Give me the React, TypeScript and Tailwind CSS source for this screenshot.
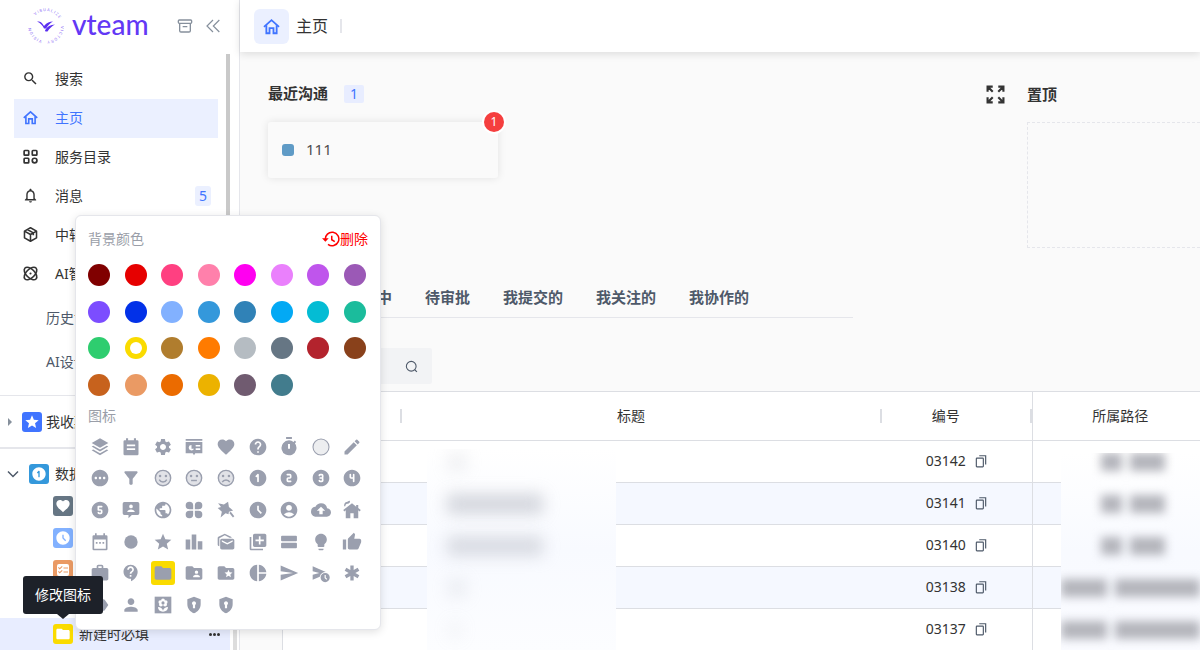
import type { ComponentType, ReactNode } from "react";
import clsx from "clsx";
import {
  MdAccessTimeFilled,
  MdAccountCircle,
  MdBackup,
  MdChecklist,
  MdCircle,
  MdContactSupport,
  MdEdit,
  MdEmergency,
  MdFavorite,
  MdFilterAlt,
  MdFolder,
  MdFolderShared,
  MdFolderSpecial,
  MdHelp,
  MdLabel,
  MdLeaderboard,
  MdLibraryAdd,
  MdLightbulb,
  MdMarkAsUnread,
  MdNotificationsNone,
  MdPending,
  MdPerson,
  MdPieChart,
  MdPublic,
  MdSearch,
  MdSend,
  MdSettings,
  MdStar,
  MdThumbUp,
  MdWork,
} from "react-icons/md";
import {
  TbCircleNumber1Filled,
  TbCircleNumber2Filled,
  TbCircleNumber3Filled,
  TbCircleNumber4Filled,
  TbCircleNumber5Filled,
} from "react-icons/tb";

type IconType = ComponentType<{ className?: string }>;

interface SvgProps {
  className?: string;
  stroke?: number;
  children: ReactNode;
}

function Line({ className, stroke = 2, children }: SvgProps) {
  return (
    <svg viewBox="0 0 24 24" fill="none" stroke="currentColor" strokeWidth={stroke} className={className} aria-hidden>
      {children}
    </svg>
  );
}

function Solid({ className, children }: SvgProps) {
  return (
    <svg viewBox="0 0 24 24" fill="currentColor" className={className} aria-hidden>
      {children}
    </svg>
  );
}

const HomeIcon: IconType = ({ className }) => (
  <Line className={className} stroke={2.3}>
    <path d="M2.500 12.500 12 4l9.500 8.500" />
    <path d="M5.500 10.500V20.500H9.500v-6.500h5v6.500h4V10.500" />
  </Line>
);

const AppsIcon: IconType = ({ className }) => (
  <Line className={className} stroke={2.4}>
    <rect x="3" y="3.500" width="6.500" height="6.500" rx="1" />
    <rect x="14.500" y="3.500" width="6.500" height="6.500" rx="1" />
    <rect x="3" y="14.500" width="6.500" height="6.500" rx="1" />
    <circle cx="17.800" cy="17.800" r="3.300" />
  </Line>
);

const BoxIcon: IconType = ({ className }) => (
  <Line className={className} stroke={2.2}>
    <path d="m12 2.500 8.500 4.800v9.400L12 21.500l-8.500-4.800V7.300zM3.500 7.300 12 12l8.500-4.700M12 12v9.500M7.500 5l8.500 4.700V13" strokeLinejoin="round" />
  </Line>
);

const AtomIcon: IconType = ({ className }) => (
  <Line className={className} stroke={2.3}>
    <ellipse cx="12" cy="12" rx="11" ry="6" transform="rotate(45 12 12)" />
    <ellipse cx="12" cy="12" rx="11" ry="6" transform="rotate(-45 12 12)" />
    <circle cx="12" cy="12" r="1.500" fill="currentColor" stroke="none" />
  </Line>
);

const ArchiveIcon: IconType = ({ className }) => (
  <Line className={className} stroke={2}>
    <rect x="2" y="3" width="20" height="5" rx="1.500" />
    <path d="M4 8v11a2 2 0 0 0 2 2h12a2 2 0 0 0 2-2V8M8.500 13h7" />
  </Line>
);

const CollapseIcon: IconType = ({ className }) => (
  <Line className={className} stroke={1.8}>
    <path d="m12 3-9 9 9 9M21.500 3l-9 9 9 9" />
  </Line>
);

const LayersIcon: IconType = ({ className }) => (
  <Solid className={className}>
    <path d="m12 1.500 10 5.700-10 5.700L2 7.200z" />
    <path d="m2 11.500 1.900-1.100L12 15l8.100-4.600L22 11.500l-10 5.800zM2 16l1.900-1.100L12 19.500l8.100-4.600L22 16l-10 5.800z" />
  </Solid>
);

const NoteIcon: IconType = ({ className }) => (
  <Solid className={className}>
    <path
      fillRule="evenodd"
      d="M6 1.500h2.500V4h7V1.500H18V4h1.500A1.500 1.500 0 0 1 21 5.500v15a1.500 1.500 0 0 1-1.500 1.500h-15A1.500 1.500 0 0 1 3 20.500v-15A1.500 1.500 0 0 1 4.500 4H6zM7 9v2h10V9zm0 4.500v2h10v-2z"
    />
  </Solid>
);

const BoardIcon: IconType = ({ className }) => (
  <Solid className={className}>
    <path
      fillRule="evenodd"
      d="M2 2.500h20v2H2zM2 6h20v13.500h-8.500L12 22l-1.500-2.500H2zm7 3.500a3.300 3.300 0 1 0 3 4.500H9zm5 0v2h5.500v-2zm0 4v2h5.500v-2z"
    />
  </Solid>
);

const TimerIcon: IconType = ({ className }) => (
  <Solid className={className}>
    <path
      fillRule="evenodd"
      d="M8.500 0h7v2.500h-7zM12 4a9 9 0 0 1 5.500 1.900L19 4.300l1.600 1.600-1.500 1.600A9 9 0 1 1 12 4m-1.200 4.500V14h2.400V8.500z"
    />
  </Solid>
);

const RingIcon: IconType = ({ className }) => (
  <Line className={className} stroke={1.3}>
    <circle cx="12" cy="12" r="9.600" fill="currentColor" fillOpacity="0.18" />
  </Line>
);

function Face({ className, mouth }: { className?: string; mouth: string }) {
  return (
    <Line className={className} stroke={1.700}>
      <circle cx="12" cy="12" r="9.200" fill="currentColor" fillOpacity="0.3" />
      <circle cx="8.500" cy="9.500" r="1.500" fill="currentColor" stroke="none" />
      <circle cx="15.500" cy="9.500" r="1.500" fill="currentColor" stroke="none" />
      <path d={mouth} />
    </Line>
  );
}

const SmileIcon: IconType = ({ className }) => <Face className={className} mouth="M7.500 14c1.700 3.600 7.300 3.600 9 0" />;
const NeutralIcon: IconType = ({ className }) => <Face className={className} mouth="M8.500 15h7" />;
const SadIcon: IconType = ({ className }) => <Face className={className} mouth="M7.500 17c1.700-3.600 7.300-3.600 9 0" />;

const ChatPersonIcon: IconType = ({ className }) => (
  <Solid className={className}>
    <path
      fillRule="evenodd"
      d="M4 2.500h16a2 2 0 0 1 2 2V16a2 2 0 0 1-2 2h-7l-4 4v-4H4a2 2 0 0 1-2-2V4.500a2 2 0 0 1 2-2m8 3a2.200 2.200 0 1 0 0 4.400 2.200 2.200 0 0 0 0-4.400M7.500 14.500h9c0-2-2.300-3.200-4.500-3.200s-4.500 1.200-4.500 3.200"
    />
  </Solid>
);

const CloverIcon: IconType = ({ className }) => (
  <Solid className={className}>
    <path d="M11 11H6.500A4.500 4.500 0 1 1 11 6.500zM13 11V6.500a4.500 4.500 0 1 1 4.500 4.500zM11 13v4.500A4.500 4.500 0 1 1 6.500 13zM13 13h4.500a4.500 4.500 0 1 1-4.500 4.500z" />
  </Solid>
);

const WandIcon: IconType = ({ className }) => (
  <Solid className={className}>
    <path d="m2.500 4 7 1.500L14.500 2l1 6.500 5 4-5 1.500-.500 3-3.500-1-6 5 1.500-7-5-4.500 4-1z" />
    <path d="m16 15.500 1.700-1.500 4.300 5.500-1.700 1.500z" />
  </Solid>
);

const CottageIcon: IconType = ({ className }) => (
  <Solid className={className}>
    <path d="M12 4 1.500 12l1.300 1.700L4.500 12.400V22H10v-6h4v6h5.500v-9.600l1.700 1.300 1.300-1.700-3-2.300V6H17v2z" />
    <path d="M4 7.500C4 5 5.500 4.500 7 4.500S8.500 3 9.500 3V1c-2.500 0-2.500 1.500-4 1.500S2.500 4 2.500 7.500z" />
  </Solid>
);

const CalendarIcon: IconType = ({ className }) => (
  <Solid className={className}>
    <path
      fillRule="evenodd"
      d="M6 1.500h2V4h8V1.500h2V4h1.500A1.500 1.500 0 0 1 21 5.500v15a1.500 1.500 0 0 1-1.500 1.500h-15A1.500 1.500 0 0 1 3 20.500v-15A1.500 1.500 0 0 1 4.500 4H6zM5 9v11h14V9zm2 3h2v2H7zm4 0h2v2h-2zm4 0h2v2h-2z"
    />
  </Solid>
);

const DotIcon: IconType = ({ className }) => (
  <Solid className={className}>
    <circle cx="12" cy="12" r="8" />
  </Solid>
);

const RowsIcon: IconType = ({ className }) => (
  <Solid className={className}>
    <rect x="2.500" y="4.500" width="19" height="6.500" rx="1.200" />
    <rect x="2.500" y="13" width="19" height="6.500" rx="1.200" />
  </Solid>
);

const SendLaterIcon: IconType = ({ className }) => (
  <Solid className={className}>
    <path d="M2 4v6l8 2-8 2v6l8.500-3.600A7 7 0 0 1 18.500 11z" />
    <path
      fillRule="evenodd"
      d="M17 12a5.500 5.500 0 1 1 0 11 5.500 5.500 0 0 1 0-11m-.700 2.500v3.400l2.200 2.200 1-1-1.800-1.800v-2.800z"
    />
  </Solid>
);

const FlowerIcon: IconType = ({ className }) => (
  <Solid className={className}>
    <rect x="2" y="2" width="20" height="20" />
    <g fill="#fff">
      <circle cx="12" cy="6.500" r="2.300" />
      <circle cx="8.800" cy="8.500" r="2.300" />
      <circle cx="15.200" cy="8.500" r="2.300" />
      <circle cx="9.500" cy="11.500" r="2.300" />
      <circle cx="14.500" cy="11.500" r="2.300" />
      <path d="M6 14.500c3 0 5.200 1.500 6 4.500.8-3 3-4.500 6-4.500 0 3.500-2.500 5.500-6 5.500s-6-2-6-5.500" />
    </g>
    <circle cx="12" cy="9.500" r="1.900" />
  </Solid>
);

const ShieldIcon: IconType = ({ className }) => (
  <Solid className={className}>
    <path
      fillRule="evenodd"
      d="M12 2 4 5v6.200c0 5 3.300 9.200 8 10.800 4.700-1.600 8-5.800 8-10.800V5zm0 5.500a2.500 2.500 0 0 1 1.300 4.600V16h-2.600v-3.900A2.500 2.500 0 0 1 12 7.500"
    />
  </Solid>
);

const RestoreIcon: IconType = ({ className }) => (
  <Line className={className}>
    <path d="M4.500 13A9 9 0 1 1 8 19.200" />
    <path d="M13 7.500V13l4 2.500" />
    <path d="M0 11h9l-4.500 4.500z" fill="currentColor" stroke="none" />
  </Line>
);

const ExpandIcon: IconType = ({ className }) => (
  <Line className={className} stroke={2.700}>
    <path d="M2 8.500V2h6.500M2 2l6.500 6.500M15.500 2H22v6.500M22 2l-6.500 6.500M2 15.500V22h6.500M2 22l6.500-6.500M22 15.500V22h-6.500M22 22l-6.500-6.500" />
  </Line>
);

const CopyIcon: IconType = ({ className }) => (
  <Line className={className}>
    <rect x="4" y="7" width="12" height="15" rx="1" />
    <path d="M9 3h11v15" />
  </Line>
);

const MENU: { icon: IconType; label: string; count?: number }[] = [
  { icon: MdSearch, label: "搜索" },
  { icon: HomeIcon, label: "主页" },
  { icon: AppsIcon, label: "服务目录" },
  { icon: MdNotificationsNone, label: "消息", count: 5 },
  { icon: BoxIcon, label: "中转" },
  { icon: AtomIcon, label: "AI智" },
];

const COLORS = [
  "#800000", "#e60000", "#ff4081", "#ff80ab", "#ff00f0", "#ea80fc", "#bf55ec", "#9b59b6",
  "#7c4dff", "#0231e8", "#82b1ff", "#3498db", "#3082b7", "#03a9f4", "#04bcd4", "#1bbc9c",
  "#2ecd6f", "#fadb00", "#b07d2e", "#ff7b00", "#b5bcc2", "#667684", "#b3232d", "#89411b",
  "#c7621d", "#ea9a64", "#eb6b00", "#ecb200", "#705b70", "#427c8d",
];
const ACTIVE_COLOR = "#fadb00";

const ICONS: IconType[] = [
  LayersIcon, NoteIcon, MdSettings, BoardIcon, MdFavorite, MdHelp, TimerIcon, RingIcon, MdEdit,
  MdPending, MdFilterAlt, SmileIcon, NeutralIcon, SadIcon, TbCircleNumber1Filled, TbCircleNumber2Filled, TbCircleNumber3Filled, TbCircleNumber4Filled,
  TbCircleNumber5Filled, ChatPersonIcon, MdPublic, CloverIcon, WandIcon, MdAccessTimeFilled, MdAccountCircle, MdBackup, CottageIcon,
  CalendarIcon, DotIcon, MdStar, MdLeaderboard, MdMarkAsUnread, MdLibraryAdd, RowsIcon, MdLightbulb, MdThumbUp,
  MdWork, MdContactSupport, MdFolder, MdFolderShared, MdFolderSpecial, MdPieChart, MdSend, SendLaterIcon, MdEmergency,
  MdLabel, MdPerson, FlowerIcon, ShieldIcon, ShieldIcon,
];

const TABS = ["进行中", "待审批", "我提交的", "我关注的", "我协作的"];

// title and path are redacted, so each row only keeps the size of its smudge
const ROWS = [
  { id: "03142", title: "w-5 opacity-20", path: "ml-10 w-16" },
  { id: "03141", title: "w-24 opacity-60", path: "ml-10 w-16" },
  { id: "03140", title: "w-24 opacity-50", path: "ml-10 w-16" },
  { id: "03138", title: "w-5 opacity-20", path: "w-full" },
  { id: "03137", title: "w-4 opacity-10", path: "w-full" },
];

function Logo() {
  return (
    <div className="flex items-center gap-2">
      <svg viewBox="0 0 36 36" className="size-9" aria-hidden>
        <defs>
          <path id="ring" d="M18 33A15 15 0 1 1 18.100 33" />
        </defs>
        <g className="fill-[#8b6cf5] font-['Roboto',sans-serif] text-[4px]">
          <text>
            <textPath href="#ring" startOffset="4">V I S I O N</textPath>
          </text>
          <text>
            <textPath href="#ring" startOffset="35">V I S U A L I Z E</textPath>
          </text>
          <text>
            <textPath href="#ring" startOffset="70">V I C T O R Y</textPath>
          </text>
        </g>
        <path
          d="M9 13.500c3 0 4.500.5 6 3l1 1.500c3-3.500 5.500-4.500 9-4.500-3 1.500-5 4-7 7h-2c-1.500-3-3.500-5.500-7-7m8 9c2.500-4.500 5.500-5.500 10-6-3 1.500-5.500 4-7.500 7h-2z"
          fill="#5b2ff0"
        />
      </svg>
      <span className="pb-1 font-['Lato',sans-serif] text-[28px] leading-8 font-medium text-[#6338f5]">vteam</span>
    </div>
  );
}

function NodeIcon({ icon: Icon, className }: { icon: IconType; className: string }) {
  return (
    <span className={clsx("flex size-5 shrink-0 items-center justify-center rounded-[3px] text-white", className)}>
      <Icon className="size-4" />
    </span>
  );
}

function Sidebar() {
  return (
    <aside className="flex w-60 shrink-0 flex-col border-r border-[#e5e6eb] bg-white">
      <div className="flex h-[54px] shrink-0 items-center pr-[18px] pb-[2px] pl-7">
        <Logo />
        <button type="button" aria-label="归档" className="ml-auto text-[#86909c]">
          <ArchiveIcon className="size-4" />
        </button>
        <button type="button" aria-label="收起" className="ml-3 text-[#86909c]">
          <CollapseIcon className="size-4" />
        </button>
      </div>

      <div className="flex border-b border-[#e5e6eb]">
        <nav className="h-[341px] flex-1 pt-[6px] pl-[14px]">
          {MENU.map(({ icon: Icon, label, count }) => (
            <a
              key={label}
              href="#"
              className={clsx(
                "mr-2 flex h-[39px] items-center pr-[7px] pb-[2px] pl-2",
                label === "主页" ? "bg-[#ebf0ff] text-[#4074ff]" : "text-[#333]",
              )}
            >
              <Icon className="size-[17px]" />
              <span className="ml-4">{label}</span>
              {count && <span className="ml-auto rounded-[3px] bg-[#ebf0ff] px-1 text-[#4074ff]">{count}</span>}
            </a>
          ))}
          <div className="pt-[2px]">
            {["历史记录", "AI设计"].map((label) => (
              <a key={label} href="#" className="flex h-11 items-center pl-8 text-[#4e5969]">
                {label}
              </a>
            ))}
          </div>
        </nav>
        <div className="mr-[9px] w-1 bg-[#c9c9c9]" />
      </div>

      <div className="flex h-[53px] shrink-0 items-center gap-1 border-b-2 border-[#e5e6eb] pl-2">
        <span className="mr-[6px] border-y-4 border-l-4 border-y-transparent border-l-[#86909c]" />
        <NodeIcon icon={MdStar} className="bg-[#4074ff]" />
        <span className="text-[#333]">我收藏</span>
      </div>

      <div className="relative flex min-h-0 flex-1">
        <div className="w-[230px]">
          <div className="flex h-[41px] items-center gap-[6px] pt-2 pl-[7px]">
            <svg viewBox="0 0 12 12" className="size-3" fill="none" stroke="#4e5969" strokeWidth="1.500" aria-hidden>
              <path d="m1 3.500 5 5 5-5" />
            </svg>
            <NodeIcon icon={TbCircleNumber1Filled} className="ml-1 bg-[#3498db]" />
            <span className="text-[#333]">数据</span>
          </div>
          <div className="flex h-8 items-center pl-[53px]">
            <NodeIcon icon={MdFavorite} className="bg-[#667684]" />
          </div>
          <div className="flex h-8 items-center pl-[53px]">
            <NodeIcon icon={MdAccessTimeFilled} className="bg-[#82b1ff]" />
          </div>
          <div className="flex h-8 items-center pl-[53px]">
            <span className="flex size-5 items-center justify-center rounded-[3px] bg-[#ea9a64]">
              <MdChecklist className="size-3 rounded-[2px] bg-white text-[#ea9a64]" />
            </span>
          </div>
          <div className="h-8" />
          <a href="#" className="flex h-8 items-center gap-[6px] bg-[#e8edff] pr-[10px] pl-[53px] text-[#333]">
            <NodeIcon icon={MdFolder} className="bg-[#fadb00]" />
            新建时必填
            <span className="ml-auto flex gap-px">
              <i className="size-[3px] rounded-full bg-[#333]" />
              <i className="size-[3px] rounded-full bg-[#333]" />
              <i className="size-[3px] rounded-full bg-[#333]" />
            </span>
          </a>
        </div>
        <div className="ml-[3px] w-1 bg-[#ddd]" />
      </div>
    </aside>
  );
}

function IconPicker() {
  return (
    <div className="absolute top-[215px] left-[75px] z-20 h-[415px] w-[306px] rounded-[6px] border border-[#e5e6eb] bg-white pl-3 shadow-[0_2px_8px_rgba(0,0,0,0.12)]">
      <div className="flex h-[48px] items-center justify-between pr-3 pb-[3px] text-[#9a9ea8]">
        背景颜色
        <button type="button" className="flex items-center text-[#ff0000]">
          <RestoreIcon className="size-[18px]" />
          删除
        </button>
      </div>
      <div className="grid h-[146px] w-[292px] grid-cols-8 grid-rows-4">
        {COLORS.map((color) => (
          <button
            key={color}
            type="button"
            aria-label={color}
            className="flex size-[22px] items-center justify-center rounded-full"
            style={{ backgroundColor: color }}
          >
            {color === ACTIVE_COLOR && <span className="size-3 rounded-full bg-white" />}
          </button>
        ))}
      </div>
      <div className="h-[21px] leading-3 text-[#9a9ea8]">图标</div>
      <div className="-ml-1 grid h-[190px] w-[284px] grid-cols-9 grid-rows-6 text-[#9a9fae]">
        {ICONS.map((Icon, i) => (
          <button
            key={i}
            type="button"
            aria-label={`图标 ${i + 1}`}
            className={clsx(
              "flex size-6 items-center justify-center place-self-center rounded-[3px]",
              Icon === MdFolder && "bg-[#fadb00]",
            )}
          >
            <Icon className="size-5" />
          </button>
        ))}
      </div>
    </div>
  );
}

function TaskTable() {
  return (
    <div className="relative ml-[42px] flex-1 overflow-hidden border-l border-[#dcdee3] bg-white">
      <table className="w-full min-w-[949px] table-fixed text-[#333]">
        <thead>
          <tr className="h-12 border-b border-[#dcdee3]">
            <th className="w-[119px] font-normal">
              <span className="ml-auto block h-[14px] w-[2px] bg-[#dcdee3]" />
            </th>
            <th className="font-normal">
              <span className="flex items-center justify-between">
                <span className="flex-1 pr-5">标题</span>
                <span className="h-[14px] w-[2px] bg-[#dcdee3]" />
              </span>
            </th>
            <th className="w-[150px] border-r border-[#dcdee3] font-normal">
              <span className="flex items-center justify-between">
                <span className="flex-1 pr-5">编号</span>
                <span className="h-[14px] w-[2px] bg-[#dcdee3]" />
              </span>
            </th>
            <th className="w-[200px] pr-6 font-normal">所属路径</th>
          </tr>
        </thead>
        <tbody>
          {ROWS.map(({ id }) => (
            <tr key={id} className="h-[42px] border-b border-[#dcdee3] even:bg-[#f5f8ff]">
              <td />
              <td />
              <td className="border-r border-[#dcdee3]">
                <span className="flex items-center justify-center gap-2">
                  {id}
                  <button type="button" aria-label="复制" className="text-[#4e5969]">
                    <CopyIcon className="size-[14px]" />
                  </button>
                </span>
              </td>
              <td />
            </tr>
          ))}
        </tbody>
      </table>

      <div className="absolute top-[57px] bottom-0 left-[144px] w-[189px] overflow-hidden bg-linear-to-b from-white via-[#f8faff] to-[#fcfdff] pt-[3px] pl-5">
        {ROWS.map(({ id, title }) => (
          <div key={id} className="flex h-[42px] items-start">
            <div className={clsx("h-5 bg-[#b9bcc6] blur-[8px]", title)} />
          </div>
        ))}
      </div>
      <div className="absolute top-[61px] right-0 bottom-0 left-[778px] overflow-hidden bg-linear-to-b from-white via-[#f8faff] to-[#fafbff]">
        {ROWS.map(({ id, path }) => (
          <div key={id} className="flex h-[42px] items-start">
            <div className={clsx("flex h-[18px] gap-2 blur-[5px]", path)}>
              <div className="w-1/3 bg-[#b4b5bc]" />
              <div className="flex-1 bg-[#b4b5bc]" />
            </div>
          </div>
        ))}
      </div>
    </div>
  );
}

export default function App() {
  return (
    <div className="relative flex h-screen overflow-hidden bg-[#fafafa] font-['Noto_Sans','Noto_Sans_CJK_SC',sans-serif] text-sm">
      <Sidebar />

      <main className="flex min-w-0 flex-1 flex-col">
        <header className="z-10 flex h-[52px] shrink-0 items-center bg-white pl-[14px] shadow-[0_2px_8px_rgba(0,0,0,0.12)]">
          <span className="flex size-[35px] items-center justify-center rounded-[6px] bg-[#ebf0ff] text-[#4074ff]">
            <HomeIcon className="size-[19px]" />
          </span>
          <h1 className="ml-[7px] text-base text-[#333]">主页</h1>
          <span className="ml-3 h-[14px] w-[2px] bg-[#e5e6eb]" />
        </header>

        <div className="flex h-[226px] shrink-0 pt-[30px] pl-7">
          <section className="min-w-0 flex-1">
            <div className="flex h-6 items-center">
              <h2 className="text-[15px] font-bold text-[#333]">最近沟通</h2>
              <span className="ml-4 rounded-[2px] bg-[#e8edff] px-[6px] leading-[18px] text-[#4074ff]">1</span>
              <button type="button" aria-label="展开" className="mr-[22px] ml-auto text-[#333]">
                <ExpandIcon className="size-[19px]" />
              </button>
            </div>
            <a
              href="#"
              className="relative mt-4 flex h-14 w-[230px] items-center gap-3 rounded-[3px] bg-[#fafafa] pl-[14px] text-[15px] text-[#4e4e4e] shadow-[0_0_8px_rgba(0,0,0,0.1)]"
            >
              <span className="size-3 rounded-[3px] bg-[#5f9bc6]" />
              111
              <span className="absolute -top-[10px] -right-[6px] flex size-5 items-center justify-center rounded-full bg-[#f53f3f] text-xs text-white ring-2 ring-white">
                1
              </span>
            </a>
          </section>
          <section className="w-[173px] shrink-0">
            <h2 className="text-[15px] leading-6 font-bold text-[#333]">置顶</h2>
            <div className="mt-4 h-[126px] border border-r-0 border-dashed border-[#e5e6eb]" />
          </section>
        </div>

        <div className="ml-7 flex h-10 w-[585px] shrink-0 items-center gap-[33px] border-b border-[#e5e6eb] pl-[79px] text-[15px] font-bold text-[#4e5969]">
          {TABS.map((tab) => (
            <button key={tab} type="button">
              {tab}
            </button>
          ))}
        </div>

        <div className="flex h-[74px] shrink-0 items-end border-b border-[#dcdee3] pb-[7px] pl-7">
          <label className="flex h-9 w-[164px] items-center rounded-[2px] bg-[#f2f3f5] pr-[14px]">
            <input type="text" aria-label="搜索任务" className="min-w-0 flex-1 bg-transparent pl-3 outline-none" />
            <Line className="size-[13px] text-[#4e5969]">
              <circle cx="11.500" cy="11.500" r="9" />
              <path d="m18 18 4 4" />
            </Line>
          </label>
        </div>

        <TaskTable />
      </main>

      <IconPicker />

      <div
        role="tooltip"
        className="absolute top-[576px] left-[23px] z-30 flex h-[38px] items-center rounded-[3px] bg-[#1d2129] px-3 text-white"
      >
        修改图标
        <span className="absolute -bottom-[5px] left-1/2 -translate-x-1/2 border-x-[6px] border-t-[5px] border-x-transparent border-t-[#1d2129]" />
      </div>
    </div>
  );
}
